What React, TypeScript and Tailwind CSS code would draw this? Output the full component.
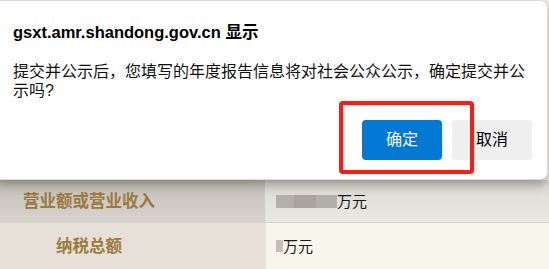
import React from "react";

export default function App() {
  const font = { fontFamily: '"Liberation Sans", "Noto Sans CJK SC", sans-serif' };
  return (
    <div className="relative w-[549px] h-[269px] overflow-hidden bg-[#f8f5ec]" style={font}>
      {/* dialog */}
      <div className="relative z-10 ml-[-8px] w-[556px] h-[180px] bg-white rounded-lg border border-[#dcdcdc] shadow-[0_4px_12px_rgba(0,0,0,0.35)] pl-[20px] pr-[15px] pt-[21px] flex flex-col">
        <div className="text-[16.5px] leading-[20px] font-bold text-black">gsxt.amr.shandong.gov.cn 显示</div>
        <div className="mt-[20px] text-[16px] leading-[19px] text-[#111]">
          提交并公示后，您填写的年度报告信息将对社会公众公示，确定提交并公示吗?
        </div>
        <div className="mt-auto mb-[19px] flex justify-end gap-[10px]">
          <button className="w-[80px] h-[40px] rounded-[4px] bg-[#0078d4] text-white text-[16px]">确定</button>
          <button className="w-[80px] h-[40px] rounded-[4px] bg-[#efefef] text-black text-[16px]">取消</button>
        </div>
        <div className="absolute left-[346px] top-[100px] w-[135px] h-[73px] border-[4px] border-[#ff1a12] rounded-[4px]" />
      </div>
      {/* background table */}
      <div className="flex flex-col">
        <div className="flex h-[43px] border-b border-[#d9d5cf]">
          <div className="w-[266px] border-r border-[#e4e0da] bg-gradient-to-b from-[#c4bfb8] to-[#d8d3cc] flex items-center">
            <div className="w-[178px] text-center text-[16.5px] font-bold text-[#9b7a3e]">营业额或营业收入</div>
          </div>
          <div className="flex-1 bg-gradient-to-b from-[#dcd9d3] to-[#ebe9e3] flex items-center pl-[10px]">
            <div className="flex h-[13px]">
              <div className="w-[18px] bg-[#b3b0ac]" />
              <div className="w-[22px] bg-[#aaa4a0]" />
              <div className="w-[21px] bg-[#b2aeaa]" />
            </div>
            <span className="text-[15px] text-[#1a1a1a] leading-none">万元</span>
          </div>
        </div>
        <div className="flex h-[46px]">
          <div className="w-[266px] border-r border-[#ece8e1] bg-[#e6e0d8] flex items-center">
            <div className="w-[178px] text-center text-[16.5px] font-bold text-[#9b7a3e]">纳税总额</div>
          </div>
          <div className="flex-1 bg-[#f8f5ec] flex items-center pl-[10px]">
            <div className="w-[7px] h-[12px] bg-[#c3c0bb]" />
            <span className="text-[15px] text-[#1a1a1a] leading-none">万元</span>
          </div>
        </div>
      </div>
    </div>
  );
}
